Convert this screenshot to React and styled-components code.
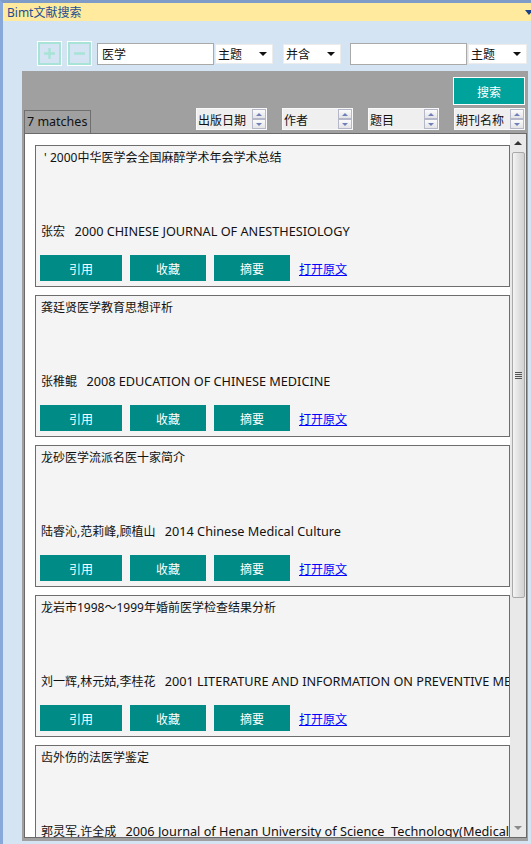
import React from "react";
import styled, { createGlobalStyle } from "styled-components";

const GlobalStyle = createGlobalStyle`
  html, body {
    margin: 0;
    padding: 0;
    background-color: #d5e4f3;
  }
  body {
    font-family: "Noto Sans", "Noto Sans CJK SC", sans-serif;
    font-size: 12px;
    color: #111;
  }
`;

const Window = styled.div`
  height: 844px;
  box-sizing: border-box;
  border-left: 3px solid #88a8d9;
  border-top: 3px solid #7f9cc8;
  display: flex;
  flex-direction: column;
  overflow: hidden;
`;

const TitleBar = styled.div`
  height: 18px;
  flex-shrink: 0;
  background-color: #ffea9d;
  color: #1d4f94;
  display: flex;
  align-items: center;
  justify-content: space-between;
  padding-left: 4px;
  font-size: 12px;
`;

const TitleArrow = styled.span`
  width: 0;
  height: 0;
  border-left: 4px solid transparent;
  border-right: 4px solid transparent;
  border-top: 5px solid #1a418a;
  margin-right: -2px;
`;

const Toolbar = styled.div`
  display: flex;
  align-items: center;
  height: 23px;
  margin-top: 21px;
  padding-left: 35px;
  flex-shrink: 0;
`;

const IconGroup = styled.div`
  display: flex;
  gap: 7px;
  margin-right: 6px;
`;

const IconButton = styled.button`
  width: 23px;
  height: 23px;
  box-sizing: border-box;
  padding: 0;
  border: 2px solid #a7e3d6;
  box-shadow: 0 0 0 1px #fff;
  background: transparent;
  display: flex;
  align-items: center;
  justify-content: center;
`;

const Field = styled.div`
  display: flex;
  align-items: center;
  margin-right: ${(p) => p.$gap || 0}px;
`;

const TextInput = styled.div`
  width: 117px;
  height: 22px;
  box-sizing: border-box;
  border: 1px solid #a9a9a9;
  background: #fff;
  padding-left: 4px;
  font-family: "Noto Sans CJK SC", sans-serif;
  font-size: 12px;
  line-height: 20px;
`;

const Select = styled.div`
  width: ${(p) => p.$w || 58}px;
  height: 20px;
  box-sizing: border-box;
  border: 1px solid #ececec;
  background: #fff;
  display: flex;
  align-items: center;
  justify-content: space-between;
  padding: 0 5px 0 2px;
  margin-left: ${(p) => p.$ml || 0}px;
  font-family: "Noto Sans CJK SC", sans-serif;
  font-size: 12px;
`;

const DropArrow = styled.span`
  width: 0;
  height: 0;
  border-left: 4px solid transparent;
  border-right: 4px solid transparent;
  border-top: 4px solid #111;
`;

const Panel = styled.div`
  flex: 1;
  min-height: 0;
  margin: 6px 3px 3px 19px;
  background-color: #a0a0a0;
  display: flex;
  flex-direction: column;
  padding: 0 1px 3px 2px;
`;

const SearchRow = styled.div`
  display: flex;
  justify-content: flex-end;
  padding: 6px 2px 0 0;
`;

const SearchButton = styled.button`
  width: 72px;
  height: 28px;
  box-sizing: border-box;
  border: 1px solid #fff;
  background-color: #00a29c;
  color: #fff;
  font-family: "Noto Sans CJK SC", sans-serif;
  font-size: 12px;
  padding: 0;
`;

const SortRow = styled.div`
  display: flex;
  align-items: flex-start;
  margin-top: 3px;
`;

const MatchBox = styled.div`
  width: 67px;
  height: 23px;
  box-sizing: border-box;
  margin-top: 2px;
  border: 1px solid #6f6f6f;
  border-bottom: none;
  padding-left: 2px;
  line-height: 21px;
  font-size: 12.5px;
  color: #111;
  white-space: nowrap;
`;

const SortGroup = styled.div`
  display: flex;
  gap: 15px;
  margin-left: auto;
  margin-right: 2px;
`;

const SortBox = styled.div`
  width: 71px;
  height: 22px;
  box-sizing: border-box;
  border: 1px solid #f9f9f9;
  background: #efefef;
  display: flex;
  align-items: center;
  justify-content: space-between;
  padding-left: 1px;
  font-family: "Noto Sans CJK SC", sans-serif;
  font-size: 12px;
`;

const Spinner = styled.div`
  width: 14px;
  height: 20px;
  display: flex;
  flex-direction: column;
`;

const SpinHalf = styled.div`
  flex: 1;
  box-sizing: border-box;
  border: 1px solid #b4b8c8;
  background: linear-gradient(#fbfbfb, #e4e4e8);
  display: flex;
  align-items: center;
  justify-content: center;
  &::after {
    content: "";
    width: 0;
    height: 0;
    border-left: 3px solid transparent;
    border-right: 3px solid transparent;
    ${(p) => (p.$up ? "border-bottom: 3px solid #6f7fb8;" : "border-top: 3px solid #6f7fb8;")}
  }
`;

const List = styled.div`
  flex: 1;
  min-height: 0;
  background: #fff;
  border: 1px solid #6a6a6a;
  display: flex;
`;

const Cards = styled.div`
  flex: 1;
  min-width: 0;
  overflow: hidden;
  display: flex;
  flex-direction: column;
  gap: 8px;
  padding: 11px 0 0 10px;
`;

const Card = styled.div`
  height: 142px;
  flex-shrink: 0;
  box-sizing: border-box;
  border: 1px solid #6d6d6d;
  background: #f4f4f4;
  display: flex;
  flex-direction: column;
  padding: 0 5px 5px 4px;
  overflow: hidden;
`;

const Title = styled.div`
  margin-top: 4px;
  padding-left: 1px;
  line-height: 16px;
  font-size: 12px;
  white-space: pre;
  flex: 1;
`;

const Authors = styled.div`
  padding-left: 1px;
  line-height: 16px;
  font-size: 12px;
  white-space: pre;
  margin-bottom: 15px;
`;

const Journal = styled.span`
  font-size: 12.7px;
`;

const ButtonRow = styled.div`
  display: flex;
  align-items: center;
  gap: 8px;
  height: 26px;
`;

const ActionButton = styled.button`
  width: ${(p) => p.$w}px;
  height: 26px;
  border: none;
  padding: 0;
  background-color: #008b86;
  color: #fff;
  font-family: "Noto Sans CJK SC", sans-serif;
  font-size: 12px;
`;

const OpenLink = styled.a`
  margin-left: 1px;
  color: #0000ff;
  text-decoration: underline;
  font-family: "Noto Sans CJK SC", sans-serif;
  font-size: 12px;
`;

const Scrollbar = styled.div`
  width: 16px;
  flex-shrink: 0;
  background: #e9e9e9;
  display: flex;
  flex-direction: column;
  align-items: center;
`;

const ScrollArrow = styled.div`
  height: 18px;
  width: 100%;
  flex-shrink: 0;
  display: flex;
  align-items: center;
  justify-content: center;
  &::after {
    content: "";
    width: 0;
    height: 0;
    border-left: 4px solid transparent;
    border-right: 4px solid transparent;
    ${(p) => (p.$up ? "border-bottom: 4px solid #333;" : "border-top: 4px solid #8a8a8a;")}
  }
`;

const Thumb = styled.div`
  width: 13px;
  height: 446px;
  box-sizing: border-box;
  border: 1px solid #a9a9a9;
  border-radius: 2px;
  background: linear-gradient(90deg, #f4f4f4, #dedede 60%, #d2d2d2);
  display: flex;
  align-items: center;
  justify-content: center;
`;

const Grip = styled.div`
  width: 7px;
  height: 7px;
  background: repeating-linear-gradient(#555 0 1px, transparent 1px 2px);
`;

const ScrollSpace = styled.div`
  flex: 1;
`;

const results = [
  { title: " ' 2000中华医学会全国麻醉学术年会学术总结", authors: "张宏", year: 2000, journal: "CHINESE JOURNAL OF ANESTHESIOLOGY" },
  { title: "龚廷贤医学教育思想评析", authors: "张稚鲲", year: 2008, journal: "EDUCATION OF CHINESE MEDICINE" },
  { title: "龙砂医学流派名医十家简介", authors: "陆睿沁,范莉峰,顾植山", year: 2014, journal: "Chinese Medical Culture" },
  { title: "龙岩市1998～1999年婚前医学检查结果分析", authors: "刘一辉,林元姑,李桂花", year: 2001, journal: "LITERATURE AND INFORMATION ON PREVENTIVE MEDICINE" },
  { title: "齿外伤的法医学鉴定", authors: "郭灵军,许全成", year: 2006, journal: "Journal of Henan University of Science  Technology(Medical Science)" },
];

const sortKeys = ["出版日期", "作者", "题目", "期刊名称"];

const PlusIcon = () => (
  <svg width="15" height="15" viewBox="0 0 15 15">
    <path d="M7.5 2v11M2 7.5h11" stroke="#a7e3d6" strokeWidth="2.4" />
  </svg>
);

const MinusIcon = () => (
  <svg width="15" height="15" viewBox="0 0 15 15">
    <path d="M2 7.5h11" stroke="#a7e3d6" strokeWidth="2.4" />
  </svg>
);

export default function App() {
  return (
    <>
      <GlobalStyle />
      <Window>
        <TitleBar>
          <span>Bimt文献搜索</span>
          <TitleArrow />
        </TitleBar>

        <Toolbar>
          <IconGroup>
            <IconButton><PlusIcon /></IconButton>
            <IconButton><MinusIcon /></IconButton>
          </IconGroup>
          <Field $gap={10}>
            <TextInput>医学</TextInput>
            <Select $ml={1}>主题<DropArrow /></Select>
          </Field>
          <Field $gap={9}>
            <Select>并含<DropArrow /></Select>
          </Field>
          <Field>
            <TextInput />
            <Select $ml={1} $w={59}>主题<DropArrow /></Select>
          </Field>
        </Toolbar>

        <Panel>
          <SearchRow>
            <SearchButton>搜索</SearchButton>
          </SearchRow>
          <SortRow>
            <MatchBox>7 matches</MatchBox>
            <SortGroup>
              {sortKeys.map((k) => (
                <SortBox key={k}>
                  {k}
                  <Spinner>
                    <SpinHalf $up />
                    <SpinHalf />
                  </Spinner>
                </SortBox>
              ))}
            </SortGroup>
          </SortRow>
          <List>
            <Cards>
              {results.map((r) => (
                <Card key={r.title}>
                  <Title>{r.title}</Title>
                  <Authors>
                    {r.authors + "   "}
                    <Journal>{r.year + " " + r.journal}</Journal>
                  </Authors>
                  <ButtonRow>
                    <ActionButton $w={82}>引用</ActionButton>
                    <ActionButton $w={76}>收藏</ActionButton>
                    <ActionButton $w={76}>摘要</ActionButton>
                    <OpenLink href="#">打开原文</OpenLink>
                  </ButtonRow>
                </Card>
              ))}
            </Cards>
            <Scrollbar>
              <ScrollArrow $up />
              <Thumb><Grip /></Thumb>
              <ScrollSpace />
              <ScrollArrow />
            </Scrollbar>
          </List>
        </Panel>
      </Window>
    </>
  );
}
